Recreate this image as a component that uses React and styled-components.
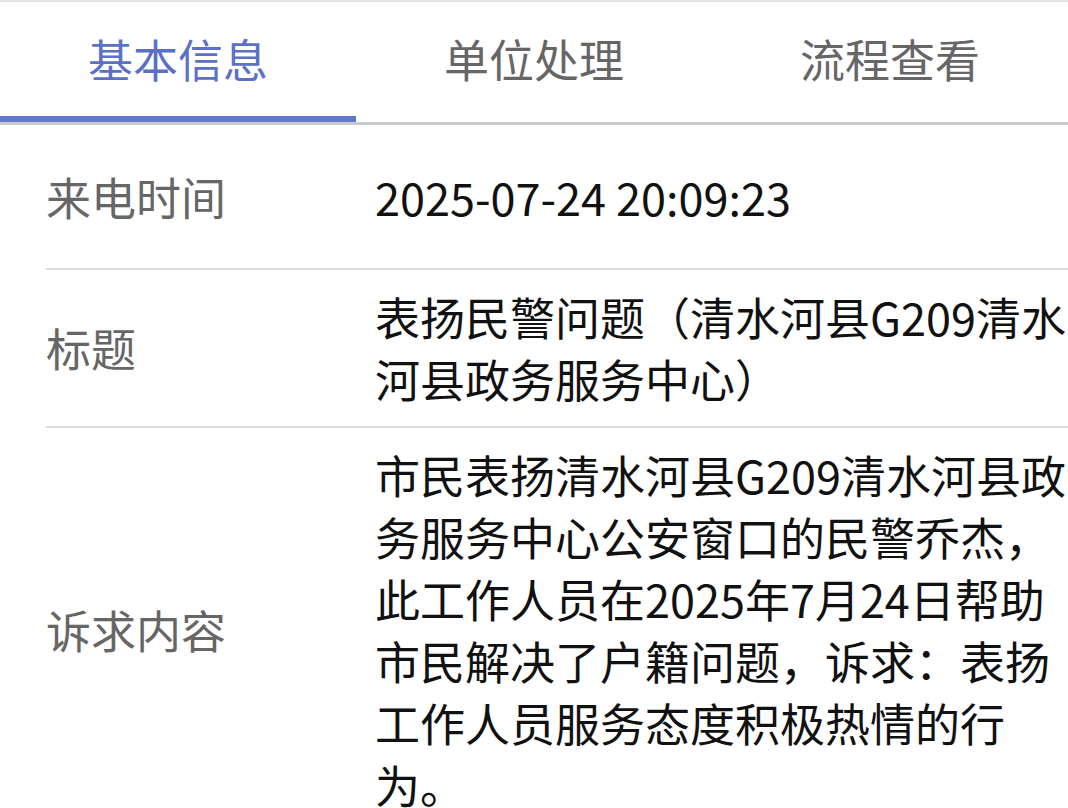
import React, { useState } from "react";
import styled, { createGlobalStyle } from "styled-components";

const GlobalStyle = createGlobalStyle`
  html, body {
    margin: 0;
    padding: 0;
    background: #ffffff;
  }
  body {
    font-family: "Noto Sans CJK SC", "Noto Sans", sans-serif;
  }
  * { box-sizing: border-box; }
`;

const Page = styled.div`
  width: 1068px;
  height: 808px;
  overflow: hidden;
  background: #ffffff;
  border-top: 2px solid #e2e2e2;
`;

const TabBar = styled.div`
  display: grid;
  grid-template-columns: repeat(3, 1fr);
  border-bottom: 3px solid #cacaca;
`;

const Tab = styled.button`
  all: unset;
  box-sizing: border-box;
  height: 120px;
  display: flex;
  align-items: center;
  justify-content: center;
  font-family: "Noto Sans CJK SC", sans-serif;
  font-size: 45px;
  line-height: 62px;
  color: ${(p) => (p.$active ? "#5b70c6" : "#666666")};
  border-bottom: 6px solid ${(p) => (p.$active ? "#6079cf" : "transparent")};
  cursor: pointer;
`;

const List = styled.div`
  padding-left: 46px;
`;

const Row = styled.div`
  display: flex;
  align-items: center;
  min-height: 145px;
  padding: 16px 0;
  border-bottom: 2px solid #dcdcdc;
`;

const Label = styled.div`
  flex: 0 0 329px;
  font-size: 45px;
  line-height: 62px;
  color: #666666;
`;

const Value = styled.div`
  flex: 1;
  min-width: 0;
  font-size: 45px;
  line-height: 62px;
  color: #111111;
  word-break: break-all;
  line-break: strict;
`;

const tabs = ["基本信息", "单位处理", "流程查看"];

const rows = [
  { label: "来电时间", value: "2025-07-24 20:09:23" },
  { label: "标题", value: "表扬民警问题（清水河县G209清水河县政务服务中心）" },
  {
    label: "诉求内容",
    value:
      "市民表扬清水河县G209清水河县政务服务中心公安窗口的民警乔杰，此工作人员在2025年7月24日帮助市民解决了户籍问题，诉求：表扬工作人员服务态度积极热情的行为。",
  },
];

export default function App() {
  const [active, setActive] = useState(0);
  return (
    <>
      <GlobalStyle />
      <Page>
        <TabBar>
          {tabs.map((t, i) => (
            <Tab key={t} $active={i === active} onClick={() => setActive(i)}>
              {t}
            </Tab>
          ))}
        </TabBar>
        <List>
          {rows.map((r) => (
            <Row key={r.label}>
              <Label>{r.label}</Label>
              <Value>{r.value}</Value>
            </Row>
          ))}
        </List>
      </Page>
    </>
  );
}
